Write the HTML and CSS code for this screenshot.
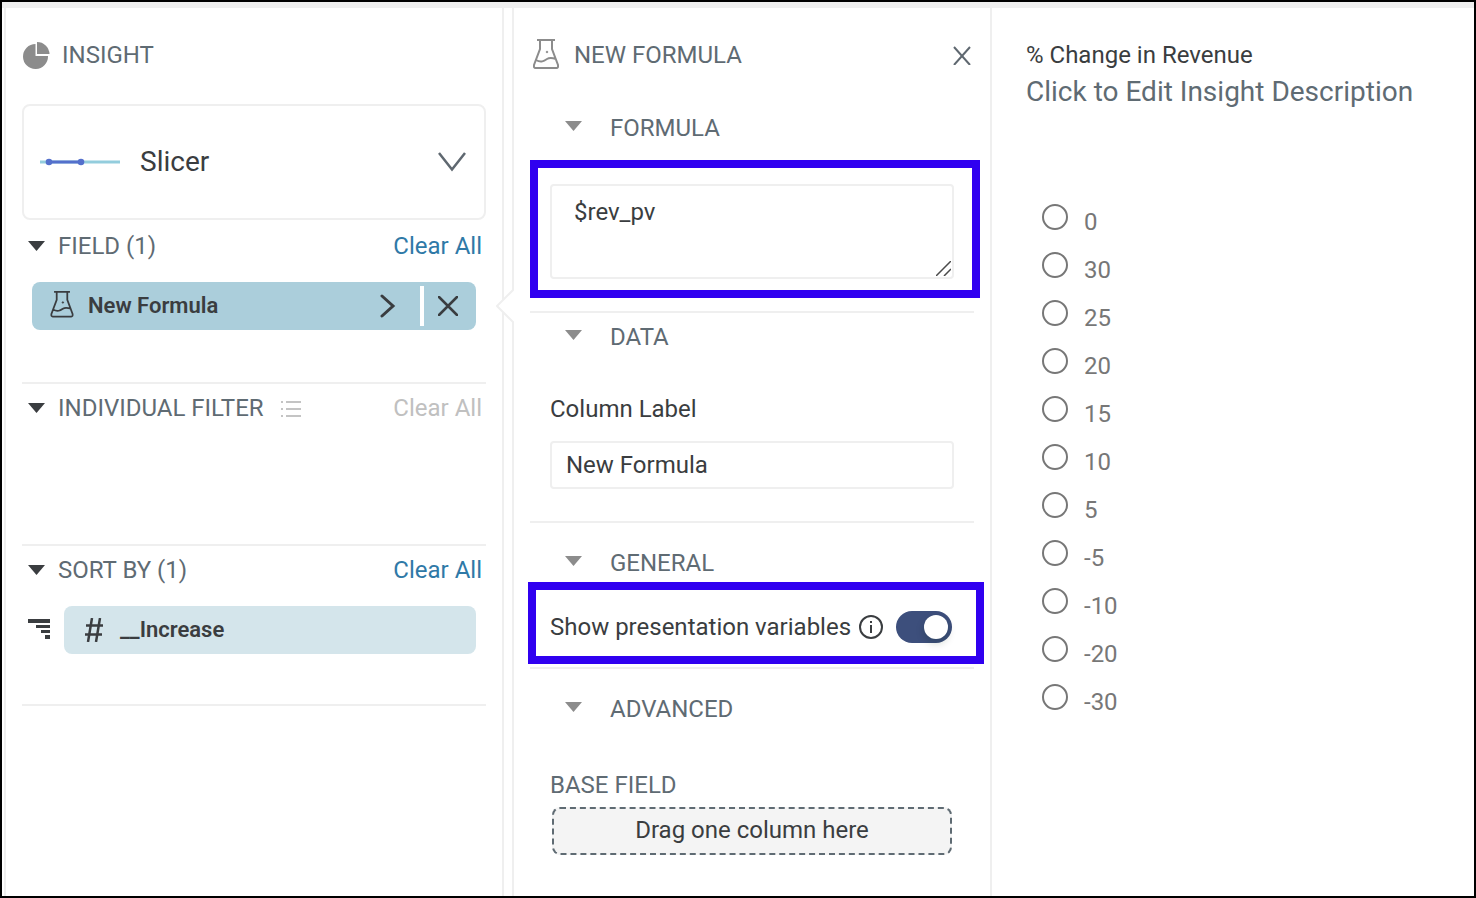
FILE: index.html
```
<!DOCTYPE html>
<html lang="en">
<head>
    <meta charset="UTF-8">
    <meta name="viewport" content="width=device-width, initial-scale=1.0">
    <title>% Change in Revenue</title>
    <link rel="stylesheet" href="styles.css">
</head>
<body>
<div id="container">

    <!-- Insight settings -->
    <aside class="panel insight">
        <h2 class="panel-title">
            <svg width="28" height="28" viewBox="0 0 28 28" fill="#8c8c8c"><path d="M13.500 3A12.500 12.500 0 1 0 26 15H13.500z"/><path d="M15 1a12.500 12.500 0 0 1 12.500 12H15z"/></svg>
            INSIGHT
        </h2>

        <div class="type-select">
            <svg width="80" height="8" viewBox="0 0 80 8"><path d="M0 4h80" stroke="#93cddd" stroke-width="3"/><path d="M9 4h32" stroke="#5470cc" stroke-width="3"/><circle cx="9" cy="4" r="3.300" fill="#5470cc"/><circle cx="41" cy="4" r="3.300" fill="#5470cc"/></svg>
            <select aria-label="Insight type">
                <option>Slicer</option>
            </select>
            <svg class="chevron" width="28" height="20" viewBox="0 0 28 20" fill="none" stroke="#5f6870" stroke-width="2.500"><path d="M1 1l13 16.500L27 1"/></svg>
        </div>

        <section class="group">
            <div class="group-head">
                <button class="toggle-group"><svg width="17" height="10" viewBox="0 0 17 10" fill="#3a3d40"><path d="M0 0h17L8.500 10z"/></svg>FIELD (1)</button>
                <a href="#">Clear All</a>
            </div>
            <div class="group-body">
                <div class="chip active">
                    <svg width="24" height="30" viewBox="0 0 26 34" fill="none" stroke="#3a3d40" stroke-width="2"><path d="M4 1h18M7 1v9L1 26q-.5 3 1.500 3h21q2 0 1.500-3L19 10V1M3 21c5 3 8 1 11-1s6-1 9 0"/><circle cx="14" cy="13" r=".8" fill="#3a3d40" stroke-width="1"/></svg>
                    <span class="chip-name">New Formula</span>
                    <button aria-label="Open"><svg width="16" height="24" viewBox="0 0 16 24" fill="none" stroke="#3a3d40" stroke-width="3" stroke-linecap="round"><path d="M2 2l11 10L2 22"/></svg></button>
                    <span class="chip-line"></span>
                    <button aria-label="Remove"><svg width="20" height="20" viewBox="0 0 20 20" stroke="#3a3d40" stroke-width="2.500" stroke-linecap="round"><path d="M1 1l18 18M19 1L1 19"/></svg></button>
                </div>
            </div>
        </section>

        <section class="group">
            <div class="group-head">
                <button class="toggle-group"><svg width="17" height="10" viewBox="0 0 17 10" fill="#3a3d40"><path d="M0 0h17L8.500 10z"/></svg>INDIVIDUAL FILTER</button>
                <svg class="list-icon" width="20" height="18" viewBox="0 0 20 18" stroke="#c4c4c4" stroke-width="2"><path d="M0 3h2M5 3h15M0 10h2M5 10h15M0 17h2M5 17h15"/></svg>
                <a href="#" class="disabled">Clear All</a>
            </div>
            <div class="group-body"></div>
        </section>

        <section class="group">
            <div class="group-head">
                <button class="toggle-group"><svg width="17" height="10" viewBox="0 0 17 10" fill="#3a3d40"><path d="M0 0h17L8.500 10z"/></svg>SORT BY (1)</button>
                <a href="#">Clear All</a>
            </div>
            <div class="group-body sort">
                <svg width="22" height="22" viewBox="0 0 22 22" fill="#3a3d40"><path d="M0 0h22v4H0zM8 6h14v3H8zM13 11h9v3h-9zM17 16h5v4h-5z"/></svg>
                <div class="chip">
                    <svg width="20" height="24" viewBox="0 0 20 24" stroke="#3a3d40" stroke-width="2.500"><path d="M8 0L4 24M16 0l-4 24M2 7.500h17M1 16.500h17"/></svg>
                    <span class="chip-name">__Increase</span>
                </div>
            </div>
        </section>
    </aside>

    <!-- Formula editor -->
    <section class="panel formula">
        <svg class="pointer" width="18" height="34" viewBox="0 0 18 34"><path d="M18 0h-1v1L1 17l16 16v1h1z" fill="#fff"/><path d="M17 0v1L1 17l16 16v1" fill="none" stroke="#efefef" stroke-width="2"/></svg>
        <h2 class="panel-title">
            <svg width="26" height="32" viewBox="0 0 26 32" fill="none" stroke="#8c8c8c" stroke-width="2"><path d="M4 1h18M7 1v9L1 26q-.5 3 1.500 3h21q2 0 1.500-3L19 10V1M3 21c5 3 8 1 11-1s6-1 9 0"/><circle cx="14" cy="13" r=".8" fill="#8c8c8c" stroke-width="1"/></svg>
            NEW FORMULA
            <button class="close" aria-label="Close"><svg width="18" height="20" viewBox="0 0 18 20" stroke="#5f6870" stroke-width="2"><path d="M1 2l16 18M17 2L1 20"/></svg></button>
        </h2>

        <div class="block expression">
            <button class="block-title"><svg width="17" height="14" viewBox="0 0 17 14" fill="#8c8c8c"><path d="M0 0h17L8.500 10z"/></svg>FORMULA</button>
            <div class="block-body marked">
                <textarea aria-label="Formula">$rev_pv</textarea>
                <svg class="grip" width="15" height="15" viewBox="0 0 15 15" stroke="#4a4a4a" stroke-width="1.500"><path d="M0 15L15 0M8 15l7-7"/></svg>
            </div>
        </div>

        <div class="block data">
            <button class="block-title"><svg width="17" height="14" viewBox="0 0 17 14" fill="#8c8c8c"><path d="M0 0h17L8.500 10z"/></svg>DATA</button>
            <div class="block-body">
                <label for="columnLabel">Column Label</label>
                <input type="text" id="columnLabel" value="New Formula">
            </div>
        </div>

        <div class="block general">
            <button class="block-title"><svg width="17" height="14" viewBox="0 0 17 14" fill="#8c8c8c"><path d="M0 0h17L8.500 10z"/></svg>GENERAL</button>
            <div class="block-body switch-row marked">
                <label for="showVars">Show presentation variables</label>
                <svg width="24" height="24" viewBox="0 0 24 24" fill="none" stroke="#3a3d40" stroke-width="2"><circle cx="12" cy="12" r="11"/><path d="M12 10v8M12 6v2"/></svg>
                <input type="checkbox" id="showVars" class="switch" checked>
            </div>
        </div>

        <div class="block advanced">
            <button class="block-title"><svg width="17" height="14" viewBox="0 0 17 14" fill="#8c8c8c"><path d="M0 0h17L8.500 10z"/></svg>ADVANCED</button>
            <div class="block-body">
                <h3>BASE FIELD</h3>
                <div class="drop-zone">Drag one column here</div>
            </div>
        </div>
    </section>

    <!-- Preview -->
    <main class="preview">
        <h1>% Change in Revenue</h1>
        <p>Click to Edit Insight Description</p>
        <div class="options">
            <label><input type="radio" name="change"><span>0</span></label>
            <label><input type="radio" name="change"><span>30</span></label>
            <label><input type="radio" name="change"><span>25</span></label>
            <label><input type="radio" name="change"><span>20</span></label>
            <label><input type="radio" name="change"><span>15</span></label>
            <label><input type="radio" name="change"><span>10</span></label>
            <label><input type="radio" name="change"><span>5</span></label>
            <label><input type="radio" name="change"><span>-5</span></label>
            <label><input type="radio" name="change"><span>-10</span></label>
            <label><input type="radio" name="change"><span>-20</span></label>
            <label><input type="radio" name="change"><span>-30</span></label>
        </div>
    </main>
</div>
</body>
</html>
```
FILE: styles.css
```
* {
    box-sizing: border-box;
}
body {
    margin: 0;
    font-family: Roboto, "Liberation Sans", sans-serif;
    font-size: 24px;
    line-height: 30px;
    color: #3a3d40;
    background-color: #fff;
}
#container {
    display: grid;
    grid-template-columns: 500px 480px 1fr;
    column-gap: 8px;
    min-height: 100vh;
    padding-left: 2px;
    border: 2px solid #000;
    box-shadow: inset 0 6px #efefef;
}
h1, h2, h3, p {
    margin: 0;
    font-size: 24px;
    font-weight: 400;
}
button, input, select, textarea {
    font: inherit;
    color: inherit;
    margin: 0;
}
button {
    display: flex;
    align-items: center;
    padding: 0;
    border: none;
    background: none;
    cursor: pointer;
}
svg {
    flex: none;
}
a {
    color: #2f79a7;
    text-decoration: none;
}
a.disabled {
    color: #c0c0c0;
}

/* Panels */
.panel {
    position: relative;
    margin-top: 6px;
    padding: 32px 16px 0;
    border-left: 2px solid #efefef;
    border-right: 2px solid #efefef;
}
.panel-title {
    display: flex;
    align-items: center;
    gap: 12px;
    height: 30px;
    color: #5f6b73;
}

/* Insight panel */
.type-select {
    display: flex;
    align-items: center;
    position: relative;
    height: 116px;
    margin: 34px 0 2px;
    padding-left: 16px;
    border: 2px solid #efefef;
    border-radius: 8px;
}
.type-select select {
    flex: 1;
    height: 100%;
    padding: 0 20px;
    border: none;
    background: none;
    appearance: none;
    font-size: 28px;
}
.chevron {
    position: absolute;
    right: 18px;
    pointer-events: none;
}
.group {
    border-bottom: 2px solid #efefef;
}
.group-head {
    display: flex;
    align-items: center;
    height: 48px;
    padding: 0 4px 0 6px;
}
.group-head a {
    margin-left: auto;
}
.toggle-group {
    gap: 13px;
    color: #5f6b73;
}
.list-icon {
    margin-left: 17px;
}
.group-body {
    min-height: 112px;
    padding: 12px 10px 50px;
}
.group-body.sort {
    display: flex;
    align-items: center;
    gap: 14px;
    min-height: 110px;
    padding-left: 6px;
}
.chip {
    display: flex;
    flex: 1;
    align-items: center;
    gap: 16px;
    height: 48px;
    padding: 0 20px;
    border-radius: 8px;
    background-color: #d4e5eb;
}
.chip.active {
    gap: 14px;
    padding: 0 18px;
    background-color: #abcedb;
}
.chip-name {
    flex: 1;
    font-size: 22px;
    font-weight: 600;
}
.chip-line {
    width: 4px;
    height: 40px;
    margin-left: 10px;
    background-color: #fff;
}

/* Formula panel */
.pointer {
    position: absolute;
    left: -18px;
    top: 281px;
}
.formula .panel-title {
    gap: 15px;
    padding: 0 3px;
}
.close {
    margin-left: auto;
}
.block {
    padding-bottom: 32px;
    border-bottom: 2px solid #efefef;
}
.block-title {
    gap: 28px;
    padding: 9px 35px 0;
    color: #5f6b73;
}
.block-body {
    position: relative;
    margin: 42px 20px 0;
}
.expression {
    padding-top: 34px;
}
.expression .block-body {
    margin-top: 41px;
}
.general .block-title, .advanced .block-title {
    padding-top: 25px;
}
.general {
    padding-bottom: 24px;
}
.general .block-body {
    margin-top: 33px;
}
.advanced {
    border-bottom: none;
}
.advanced .block-body {
    margin-top: 46px;
}
/* Blue frame that calls out a setting */
.marked::after {
    content: "";
    position: absolute;
    inset: -24px -26px -19px -20px;
    border: 8px solid #3000f0;
    pointer-events: none;
}
.switch-row.marked::after {
    inset: -29px -30px -21px -22px;
}
textarea {
    display: block;
    width: 100%;
    height: 95px;
    padding: 11px 22px;
    border: 2px solid #efefef;
    border-radius: 4px;
    resize: none;
}
.grip {
    position: absolute;
    right: 3px;
    bottom: 3px;
}
label {
    display: block;
}
input[type="text"] {
    width: 100%;
    height: 48px;
    margin-top: 17px;
    padding: 0 14px;
    border: 2px solid #efefef;
    border-radius: 4px;
}
.switch-row {
    display: flex;
    align-items: center;
    gap: 8px;
    height: 32px;
}
.switch {
    appearance: none;
    width: 56px;
    height: 32px;
    margin-left: auto;
    margin-right: 2px;
    padding: 4px;
    border-radius: 16px;
    background-color: #3d4f7c;
}
.switch::before {
    content: "";
    display: block;
    width: 24px;
    height: 24px;
    border-radius: 50%;
    background-color: #fff;
    box-shadow: 0 4px 8px rgba(0, 35, 11, 0.2);
}
.switch:checked::before {
    margin-left: auto;
}
h3 {
    color: #5f6b73;
}
.drop-zone {
    height: 48px;
    margin: 7px 2px 0;
    line-height: 42px;
    text-align: center;
    border: 2px dashed #5f6b73;
    border-radius: 8px;
    background-color: #f4f4f4;
}

/* Preview */
.preview {
    padding: 38px 26px 0;
}
.preview p {
    margin-top: 5px;
    font-size: 28px;
    line-height: 34px;
    color: #5f6b73;
}
.options {
    margin-top: 84px;
    padding-left: 16px;
}
.options label {
    display: flex;
    align-items: center;
    gap: 16px;
    height: 48px;
    color: #777;
}
.options input {
    appearance: none;
    width: 26px;
    height: 26px;
    border: 2px solid #777;
    border-radius: 50%;
}
.options input:checked {
    background-color: #3d4f7c;
}
.options span {
    padding-top: 10px;
}
```
